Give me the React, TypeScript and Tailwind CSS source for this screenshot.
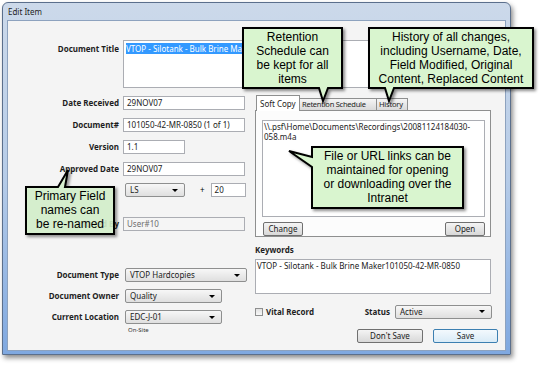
import React from "react";

type Box = { width: string; children?: React.ReactNode };

const TextBox = ({ width, children, muted }: Box & { muted?: boolean }) => (
  <div
    className={`h-[14px] ${width} shrink-0 overflow-hidden whitespace-nowrap border border-[#abadb3] pl-[3px] text-[8px] leading-[12px] ${
      muted ? "bg-[#f5f5f5] text-[#6d6d6d]" : "bg-white text-[#1b1b1b]"
    }`}
  >
    {children}
  </div>
);

const Combo = ({ width, children }: Box) => (
  <div
    className={`flex h-[14px] ${width} shrink-0 items-center rounded-[2px] border border-[#8e8f8f] bg-linear-to-b from-[#f7f7f7] to-[#dfdfdf] pl-[4px] text-[8px] text-[#1b1b1b]`}
  >
    <span>{children}</span>
    <span className="ml-auto mr-[6px] h-0 w-0 border-x-[3px] border-t-[3px] border-x-transparent border-t-black" />
  </div>
);

const Button = ({ width, children, focused }: Box & { focused?: boolean }) => (
  <div
    className={`flex h-[14px] ${width} shrink-0 items-center justify-center rounded-[2px] border text-[8px] text-[#1b1b1b] ${
      focused
        ? "border-[#3c7fb1] bg-linear-to-b from-[#f3f9fd] to-[#d9ebf7]"
        : "border-[#707070] bg-linear-to-b from-[#f4f4f4] to-[#d8d8d8]"
    }`}
  >
    {children}
  </div>
);

const Label = ({ children }: { children: React.ReactNode }) => (
  <div className="w-[115px] shrink-0 whitespace-nowrap pr-[4px] text-right text-[8px] font-bold text-[#1e1e1e]">
    {children}
  </div>
);

const Callout = ({ pos, lines }: { pos: string; lines: string[] }) => (
  <div
    className={`absolute ${pos} text-center font-['Liberation_Sans',Arial,sans-serif] text-[12px] leading-[14px] text-black`}
  >
    {lines.map((l) => (
      <div key={l}>{l}</div>
    ))}
  </div>
);

export default function App() {
  return (
    <div className="relative h-[368px] w-[544px] overflow-hidden bg-white font-['Noto_Sans',sans-serif]">
      {/* window */}
      <div className="ml-[2px] mt-[2px] flex h-[353px] w-[509px] flex-col rounded-t-[6px] border border-[#5b6f8c] bg-linear-to-b from-[#ccd9ea] via-[#b6cce8] to-[#7fa8e0] shadow-[2px_3px_5px_rgba(0,0,0,0.45)]">
        <div className="flex h-[17px] shrink-0 items-center pl-[5px] text-[8px] text-[#1e1e1e]">
          Edit Item
        </div>

        <div className="mx-[4px] mb-[3px] flex-1 border border-[#8da2be] bg-[#f4f4f4]">
          {/* document title */}
          <div className="mt-[19px] flex">
            <div className="pt-[3px]">
              <Label>Document Title</Label>
            </div>
            <div className="h-[48px] w-[368px] border border-[#abadb3] bg-white px-[2px] pt-[2px] text-[8px] leading-[11px]">
              <span className="bg-[#3399ff] text-white">VTOP - Silotank - Bulk Brine Maker</span>
            </div>
          </div>

          <div className="mt-[8px] flex gap-[8px]">
            {/* left column */}
            <div className="flex w-[239px] flex-col">
              <div className="flex items-center">
                <Label>Date Received</Label>
                <TextBox width="w-[122px]">29NOV07</TextBox>
              </div>
              <div className="mt-[8px] flex items-center">
                <Label>Document#</Label>
                <TextBox width="w-[122px]">101050-42-MR-0850 (1 of 1)</TextBox>
              </div>
              <div className="mt-[8px] flex items-center">
                <Label>Version</Label>
                <TextBox width="w-[62px]">1.1</TextBox>
              </div>
              <div className="mt-[8px] flex items-center">
                <Label>Approved Date</Label>
                <TextBox width="w-[122px]">29NOV07</TextBox>
              </div>
              <div className="mt-[7px] flex items-center pl-[117px]">
                <Combo width="w-[60px]">LS</Combo>
                <span className="ml-[15px] mr-[6px] text-[8px]">+</span>
                <TextBox width="w-[35px]">20</TextBox>
              </div>
              <div className="mt-[20px] flex items-center">
                <Label>Entered By</Label>
                <TextBox width="w-[122px]" muted>
                  User#10
                </TextBox>
              </div>
              <div className="mt-[37px] flex items-center">
                <Label>Document Type</Label>
                <div className="ml-[2px]">
                  <Combo width="w-[122px]">VTOP Hardcopies</Combo>
                </div>
              </div>
              <div className="mt-[7px] flex items-center">
                <Label>Document Owner</Label>
                <div className="ml-[2px]">
                  <Combo width="w-[97px]">Quality</Combo>
                </div>
              </div>
              <div className="mt-[7px] flex items-center">
                <Label>Current Location</Label>
                <div className="ml-[2px]">
                  <Combo width="w-[97px]">EDC-J-01</Combo>
                </div>
              </div>
              <div className="mt-[2px] pl-[120px] text-[6px] text-[#333]">On-Site</div>
            </div>

            {/* right column */}
            <div className="flex w-[243px] flex-col">
              <div className="flex h-[14px] items-end pl-[1px]">
                <div className="relative z-10 -mb-px h-[16px] w-[44px] border border-b-0 border-[#8e8f8f] bg-white pl-[3px] pt-[2px] text-[8px] text-[#1e1e1e]">
                  Soft Copy
                </div>
                <div className="h-[12px] w-[77px] overflow-hidden whitespace-nowrap border border-b-0 border-l-0 border-[#8e8f8f] bg-linear-to-b from-[#f5f5f5] to-[#dadada] pl-[2px] text-[7.5px] leading-[11px] tracking-[-0.25px] text-[#1e1e1e]">
                  Retention Schedule
                </div>
                <div className="h-[12px] w-[31px] overflow-hidden whitespace-nowrap border border-b-0 border-l-0 border-[#8e8f8f] bg-linear-to-b from-[#f5f5f5] to-[#dadada] pl-[2px] text-[7.5px] leading-[11px] tracking-[-0.2px] text-[#1e1e1e]">
                  History
                </div>
              </div>
              <div className="flex h-[127px] w-[236px] flex-col border border-[#8e8f8f] bg-[#fcfcfc]">
                <div className="ml-[6px] mt-[9px] h-[97px] w-[223px] border border-[#abadb3] bg-white px-[1px] pt-[1px] text-[8px] leading-[10px] text-[#1b1b1b]">
                  <div>{"\\\\.psf\\Home\\Documents\\Recordings\\20081124184030-"}</div>
                  <div>058.m4a</div>
                </div>
                <div className="mt-[5px] flex justify-between pl-[7px] pr-[5px]">
                  <Button width="w-[40px]">Change</Button>
                  <Button width="w-[40px]">Open</Button>
                </div>
              </div>

              <div className="mt-[8px] h-[10px] text-[8px] font-bold leading-[10px] text-[#1e1e1e]">
                Keywords
              </div>
              <div className="mt-[4px] h-[35px] w-[236px] border border-[#abadb3] bg-white px-[1px] pt-[1px] text-[8px] leading-[10px] text-[#1b1b1b]">
                VTOP - Silotank - Bulk Brine Maker101050-42-MR-0850
              </div>

              <div className="mt-[10px] flex h-[15px] items-center pr-[6px]">
                <div className="h-[8px] w-[8px] border border-[#8e8f8f] bg-linear-to-b from-[#e2e2e2] to-[#f7f7f7]" />
                <span className="ml-[3px] text-[8px] font-bold text-[#1e1e1e]">Vital Record</span>
                <span className="ml-auto mr-[5px] text-[8px] font-bold text-[#1e1e1e]">Status</span>
                <Combo width="w-[97px]">Active</Combo>
              </div>

              <div className="mt-[10px] flex justify-end gap-[10px]">
                <Button width="w-[66px]">Don't Save</Button>
                <Button width="w-[65px]" focused>
                  Save
                </Button>
              </div>
            </div>
          </div>
        </div>
      </div>

      {/* callouts */}
      <svg className="pointer-events-none absolute inset-0" width="544" height="368" viewBox="0 0 544 368">
        <defs>
          <filter id="sh" x="-10%" y="-10%" width="130%" height="140%">
            <feDropShadow dx="2" dy="2" stdDeviation="1.5" floodOpacity="0.45" />
          </filter>
        </defs>
        <g stroke="#000" strokeWidth="2" strokeLinejoin="miter" filter="url(#sh)">
          <path d="M243 28 H342 V88 H328 L323 101 L319 88 H243 Z" fill="#d9f5cf" />
          <path d="M369 28 H533 V88 H394 L389 101 L385 88 H369 Z" fill="#d9f5cf" />
          <path d="M26 187 H58 L68 170 L65 187 H114 V234 H26 Z" fill="#d9f5cf" fillOpacity="0.86" />
          <path d="M312 147 H463 V208 H312 V167 L289 151 L312 157 Z" fill="#d9f5cf" />
        </g>
      </svg>
      <Callout pos="left-[243px] top-[30px] w-[99px]" lines={["Retention", "Schedule can", "be kept for all", "items"]} />
      <Callout
        pos="left-[369px] top-[30px] w-[164px]"
        lines={["History of all changes,", "including Username, Date,", "Field Modified, Original", "Content, Replaced Content"]}
      />
      <Callout pos="left-[26px] top-[189px] w-[88px]" lines={["Primary Field", "names can", "be re-named"]} />
      <Callout
        pos="left-[312px] top-[149px] w-[151px]"
        lines={["File or URL links can be", "maintained for opening", "or downloading over the", "Intranet"]}
      />
    </div>
  );
}
